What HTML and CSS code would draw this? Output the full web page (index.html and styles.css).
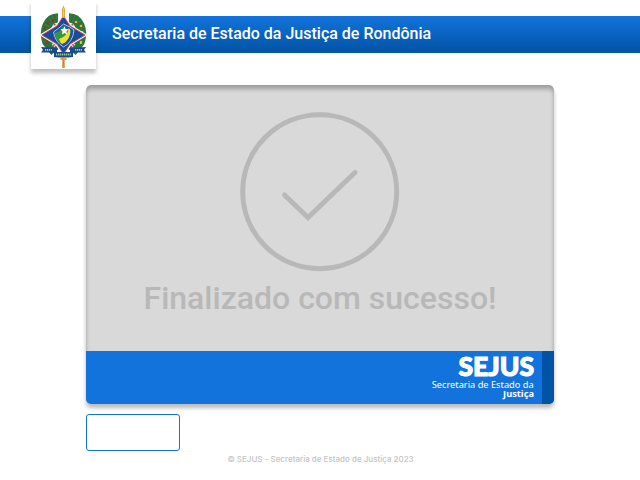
FILE: index.html
```html
<!DOCTYPE html>
<html lang="pt-BR">
<head>
<meta charset="utf-8">
<title>Secretaria de Estado da Justiça de Rondônia</title>
<link rel="stylesheet" href="styles.css">
</head>
<body>
<header class="header">
  <div class="logo">
    <svg width="65" height="69" viewBox="31 0 65 69" aria-hidden="true">
      <g fill="none">
        <path d="M58 18C48 18 43 30 47 42L55 52M69 18C79 18 84 30 80 42L72 52" stroke="#28733a" stroke-width="9.500"/>
        <path d="M57 18C47 20 43 31 47 42M70 18C80 20 84 31 80 42" stroke="#527a42" stroke-width="8" stroke-dasharray=".7 2.400"/>
        <path d="M48 21v3M53 19v3M45 27v3M50 28v3M47 40v3" stroke="#9e3029" stroke-width="2.400"/>
        <path d="M76 21v2M81 25v2M82 31v2M81 41v3" stroke="#dfbf38" stroke-width="2.200"/>
      </g>
      <path d="M54 24L74 46M73 24L53 46" stroke="#e5ccd0" stroke-width="4"/>
      <path d="M54 24L74 46M73 24L53 46" stroke="#b8505a" stroke-width="1.300"/>
      <path d="M63.500 16L70 26L85 35L70 44L63.500 54L57 44L42 35L57 26Z" fill="#164b9e" stroke="#f7eef0" stroke-width="3"/>
      <path d="M63.500 16L70 26L85 35L70 44L63.500 54L57 44L42 35L57 26Z" fill="#164b9e" stroke="#c84250" stroke-width=".9"/>
      <path d="M63.500 24Q71 27 74 30Q73 42 63.500 47Q55 42 53.500 32Q58 29 63.500 24Z" fill="#1d59aa" stroke="#d5dfec" stroke-width=".8"/>
      <path d="M54.500 33Q60 32 63 26L66 34L67 39L61 44Q56 41 54.500 33Z" fill="#36973f"/>
      <path d="M59 39Q68 36 68.500 28L71.500 31Q73 41 62.500 44Q60 43 59 39Z" fill="#f2df27"/>
      <path d="M70.500 29L73 31Q72 42 63.500 46L62 44.500Q71 40 70.500 29Z" fill="#1c54a0"/>
      <path d="M64.500 26L65.700 29L68.500 29.300L66.500 31.500L67 34.500L64.500 33L62 34.500L62.500 31.500L60.500 29.300L63.300 29Z" fill="#fff"/>
      <path d="M63.500 5.500L65 9L64.800 18H62.200L62 9Z" fill="#e1a33a"/>
      <path d="M63.500 8V17" stroke="#f4d37c" stroke-width=".8"/>
      <path d="M41 47L57 48V52.500H41L43 50ZM86 47L70 48V52.500H86L84 50Z" fill="#184b8e"/>
      <path d="M45 49.800H52M82 49.800H75" stroke="#a8c4d8" stroke-width="1.800" stroke-dasharray="1.200 .7"/>
      <path d="M54 52H73V57Q63.500 58 54 57Z" fill="#184b8e"/>
      <path d="M56 54.500H71" fill="none" stroke="#a7c38a" stroke-width="1.800" stroke-dasharray="1.300 .7"/>
      <path d="M63.500 57V68" stroke="#d07a34" stroke-width="2.200"/>
      <path d="M60.500 59H66.500M62 66.500H65" stroke="#dfa33a" stroke-width="2"/>
    </svg>
  </div>
  <h1 class="heading">Secretaria de Estado da Justiça de Rondônia</h1>
</header>
<main class="main">
  <section class="card">
    <div class="status">
      <svg class="check" width="160" height="160" viewBox="0 0 160 160" fill="none" stroke="#b8b8b8" stroke-width="5" stroke-linecap="round" aria-hidden="true">
        <circle cx="79.700" cy="79.700" r="77"/>
        <path d="M44.500 83L68 105.500L115 60.500"/>
      </svg>
      <p class="message">Finalizado com sucesso!</p>
    </div>
    <div class="brand">
      <div class="brand-text">
        <strong class="brand-name">SEJUS</strong>
        <span class="brand-line">Secretaria de Estado da</span>
        <b class="brand-line brand-bold">Justiça</b>
      </div>
    </div>
  </section>
  <button class="button" type="button" aria-label="Voltar"></button>
</main>
<footer class="footer">© SEJUS - Secretaria de Estado de Justiça 2023</footer>
</body>
</html>
```
FILE: styles.css
```css
* { box-sizing: border-box; }
body {
  margin: 0;
  height: 480px;
  padding-top: 16px;
  background: #fff;
  font-family: Roboto, sans-serif;
  overflow: hidden;
}
.header {
  display: flex;
  height: 37px;
  padding-left: 31px;
  background: linear-gradient(#1373dc, #0053a5);
}
.logo {
  width: 65px;
  height: 69px;
  margin-top: -16px;
  background: #fff;
  box-shadow: 0 4px 4px rgba(0, 0, 0, .25);
  clip-path: inset(4px -8px -10px -8px);
}
.logo svg { display: block; }
.heading {
  margin: 0 0 0 16px;
  color: #fff;
  font-size: 16px;
  font-weight: 500;
  line-height: 36px;
  white-space: nowrap;
}
.main {
  width: 468px;
  margin: 32px auto 0;
}
.card {
  height: 319px;
  overflow: hidden;
  border-radius: 5px;
  background: #d9d9d9;
  box-shadow: 0 4px 4px rgba(0, 0, 0, .27);
}
.status {
  height: 266px;
  padding-top: 27px;
  border-radius: 5px 5px 0 0;
  box-shadow: inset 0 4px 4px rgba(0, 0, 0, .28);
  text-align: center;
}
.check {
  display: block;
  margin: 0 auto;
}
.message {
  margin: 7px 0 0;
  color: #b8b8b8;
  font-size: 32px;
  font-weight: 500;
  line-height: 38px;
  white-space: nowrap;
}
.brand {
  display: flex;
  justify-content: flex-end;
  height: 53px;
  padding-right: 8px;
  border-right: 12px solid #0053a5;
  background: #1373dc;
}
.brand-text {
  display: flex;
  flex-direction: column;
  align-items: flex-end;
  color: #fff;
  font-family: "Noto Sans", sans-serif;
  white-space: nowrap;
}
.brand-name {
  margin-top: 2px;
  font-family: Lato, sans-serif;
  font-size: 26.5px;
  font-weight: 900;
  line-height: 27px;
  -webkit-text-stroke: 1.1px #fff;
}
.brand-line {
  font-size: 9.6px;
  line-height: 9.4px;
  transform: scaleX(.965);
  transform-origin: right;
}
.brand-bold { font-weight: 700; }
.button {
  display: block;
  width: 94px;
  height: 37px;
  margin-top: 10px;
  border: 1px solid #1373dc;
  border-radius: 3px;
  background: #fff;
}
.footer {
  margin-top: 3px;
  padding-left: 1px;
  color: #c4c4c4;
  font: 500 8px/11px Inter, sans-serif;
  text-align: center;
}
```
